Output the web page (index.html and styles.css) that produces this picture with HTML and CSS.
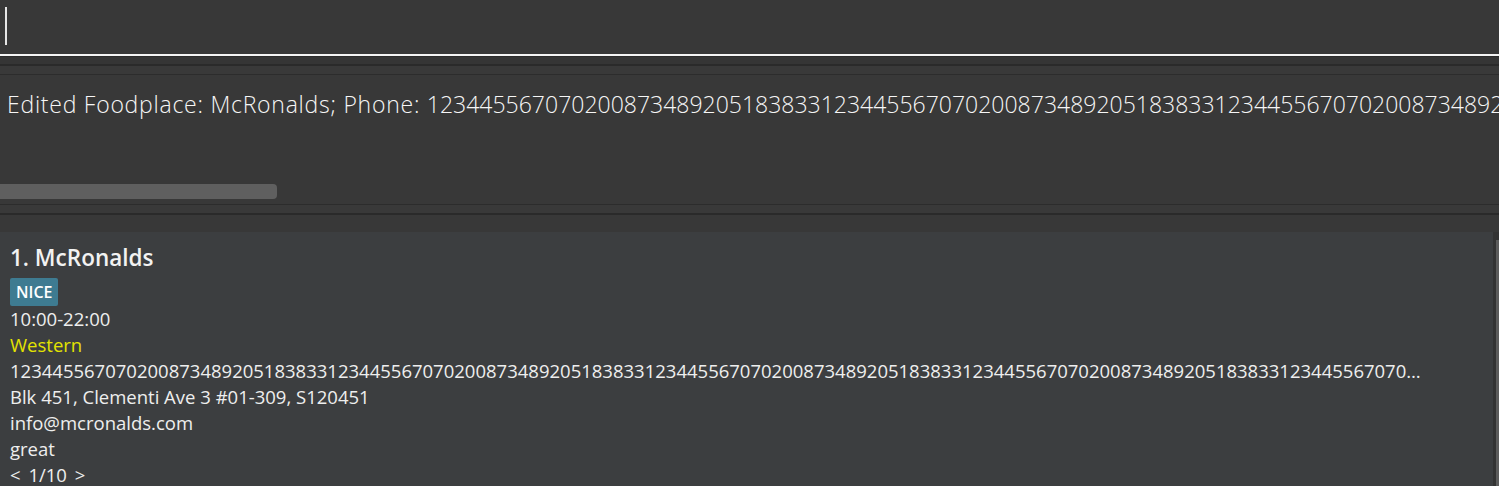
FILE: index.html
```html
<!DOCTYPE html>
<html lang="en">
<head>
<meta charset="utf-8">
<title>FoodPlace</title>
<link rel="stylesheet" href="styles.css">
</head>
<body>
<div class="app">
  <div class="command"><span class="caret"></span></div>
  <div class="split">
    <div class="split-edge"></div>
    <div class="split-band dark"></div>
    <div class="split-line"></div>
    <div class="split-band"></div>
    <div class="split-edge"></div>
  </div>
  <div class="result">
    <div class="result-text"><span class="result-label">Edited Foodplace: McRonalds; Phone: </span>123445567070200873489205183833123445567070200873489205183833123445567070200873489205183833123445567070200873489205183833123445567070200873489205183833; Email: info@mcronalds.com; Address: Blk 451, Clementi Ave 3 #01-309, S120451</div>
    <div class="hscroll"><div class="hthumb"></div></div>
  </div>
  <div class="split split-low">
    <div class="split-edge"></div>
    <div class="split-band"></div>
    <div class="split-line"></div>
  </div>
  <div class="list">
    <div class="list-row">
      <div class="card">
        <div class="card-title">1. McRonalds</div>
        <div class="tags"><span class="tag">NICE</span></div>
        <div class="field">10:00-22:00</div>
        <div class="field cuisine">Western</div>
        <div class="field phone">123445567070200873489205183833123445567070200873489205183833123445567070200873489205183833123445567070200873489205183833123445567070200873489205183833</div>
        <div class="field">Blk 451, Clementi Ave 3 #01-309, S120451</div>
        <div class="field">info@mcronalds.com</div>
        <div class="field">great</div>
        <div class="field pager">&lt; 1/10 &gt;</div>
      </div>
      <div class="vscroll"><div class="vthumb"></div></div>
    </div>
  </div>
</div>
</body>
</html>
```

FILE: styles.css
```css
html, body {
  margin: 0;
  padding: 0;
}

body {
  background: #383838;
  overflow: hidden;
  font-family: "Open Sans", "Noto Sans", sans-serif;
  color: #ffffff;
}

.app {
  display: flex;
  flex-direction: column;
  height: 486px;
  overflow: hidden;
}

.command {
  height: 54px;
  background: #383838;
  border-bottom: 2px solid #f4f4f4;
  display: flex;
  align-items: flex-start;
  padding-left: 5px;
  flex: none;
}

.caret {
  display: block;
  width: 2px;
  height: 38px;
  margin-top: 7px;
  background: #e6e6e6;
}

.split {
  display: flex;
  flex-direction: column;
  flex: none;
}

.split-edge {
  height: 1px;
  background: #2c2c2c;
}

.split-band {
  height: 8px;
  background: #393939;
}

.split-band.dark {
  height: 7px;
  background: #353535;
}

.split-line {
  height: 2px;
  background: #2a2a2a;
}

.result {
  height: 129px;
  background: #383838;
  display: flex;
  flex-direction: column;
  flex: none;
}

.result-text {
  padding: 14px 0 0 7px;
  font-size: 23px;
  font-weight: 300;
  line-height: 30px;
  white-space: nowrap;
  overflow: hidden;
  color: #f6f6f6;
}

.result-label {
  letter-spacing: 0.75px;
}

.hscroll {
  margin-top: 65px;
  height: 15px;
}

.hthumb {
  width: 277px;
  height: 15px;
  background: #5f5f5f;
  border-radius: 0 4px 4px 0;
}

.split-low .split-band {
  height: 8px;
}

.list {
  flex: 1;
  background: #383838;
  padding-top: 17px;
}

.list-row {
  display: flex;
  height: 100%;
}

.card {
  flex: 1;
  background: #3c3e40;
  padding: 12px 0 0 10px;
  min-width: 0;
}

.card-title {
  font-size: 22.5px;
  font-weight: 600;
  line-height: 28px;
  color: #f2f2f2;
}

.tags {
  display: flex;
  margin-top: 6px;
}

.tag {
  background: #3e7b91;
  color: #ffffff;
  font-size: 16px;
  font-weight: 600;
  line-height: 28px;
  height: 28px;
  padding: 0 6px;
  border-radius: 2px;
}

.field {
  font-size: 18.5px;
  line-height: 26px;
  color: #eeeeee;
  white-space: nowrap;
}

.cuisine {
  color: #e3e300;
}

.phone {
  max-width: 1412px;
  overflow: hidden;
  text-overflow: ellipsis;
}

.pager {
  word-spacing: 3px;
}

.vscroll {
  width: 6px;
  background: #333333;
  display: flex;
  justify-content: flex-end;
  padding-top: 8px;
}

.vthumb {
  width: 3px;
  height: 100%;
  background: #5c5c5c;
}
```
